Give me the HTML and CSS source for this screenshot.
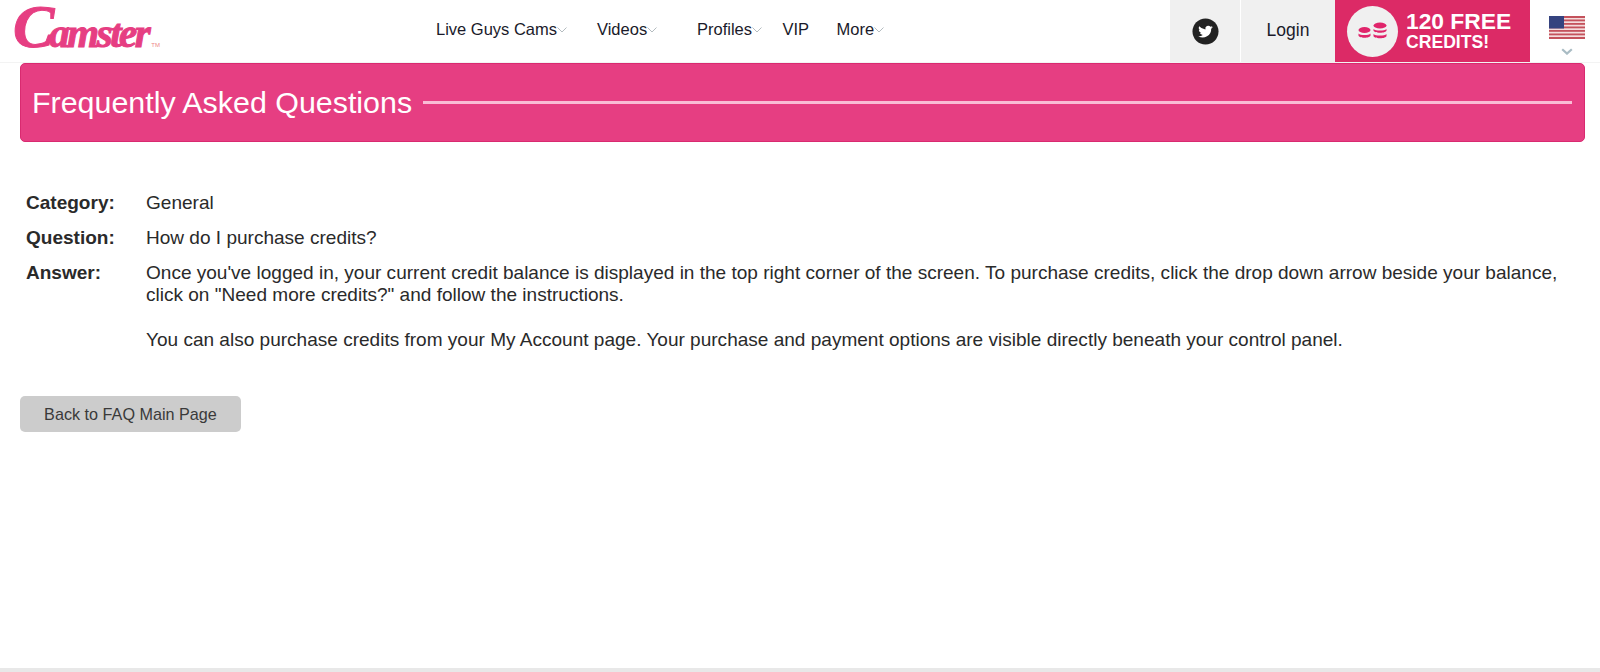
FILE: index.html
```html
<!DOCTYPE html>
<html lang="en">
<head>
<meta charset="utf-8">
<title>Frequently Asked Questions</title>
<link rel="stylesheet" href="styles.css">
</head>
<body>
<header class="header">
  <a class="logo"><span class="logo-c">C</span><span class="logo-rest">amster</span><span class="logo-tm">TM</span></a>
  <nav class="nav">
    <a class="nav-item nav-live">Live Guys Cams<svg class="caret" viewBox="0 0 10 6"><path d="M.5.5 5 5 9.5.5"/></svg></a>
    <a class="nav-item nav-videos">Videos<svg class="caret" viewBox="0 0 10 6"><path d="M.5.5 5 5 9.5.5"/></svg></a>
    <a class="nav-item nav-profiles">Profiles<svg class="caret" viewBox="0 0 10 6"><path d="M.5.5 5 5 9.5.5"/></svg></a>
    <a class="nav-item nav-vip">VIP</a>
    <a class="nav-item">More<svg class="caret" viewBox="0 0 10 6"><path d="M.5.5 5 5 9.5.5"/></svg></a>
  </nav>
  <div class="actions">
    <a class="cell cell-twitter">
      <svg class="twitter" viewBox="0 0 28 28">
        <circle cx="14" cy="14" r="13.500" fill="#222"/>
        <path fill="#fff" d="M21.600 9.400c-.6.3-1.200.4-1.800.5.6-.4 1.100-1 1.400-1.700-.6.4-1.300.6-2 .8a3.100 3.100 0 0 0-5.300 2.800A8.800 8.800 0 0 1 7.500 8.600a3.100 3.100 0 0 0 1 4.100c-.5 0-1-.2-1.400-.4 0 1.500 1.100 2.800 2.500 3.100-.5.100-.9.100-1.400 0 .4 1.200 1.500 2.100 2.900 2.100A6.200 6.200 0 0 1 6.500 18.800a8.700 8.700 0 0 0 13.400-7.700c.6-.5 1.200-1 1.700-1.700z"/>
      </svg>
    </a>
    <a class="cell cell-login">Login</a>
    <a class="cell cell-credits">
      <span class="coin-disc">
        <svg class="coins" viewBox="0 0 30 18">
          <g fill="#e0256b">
            <ellipse cx="6.500" cy="8" rx="6" ry="3"/>
            <path d="M.5 11.500c1 1 3 1.600 6 1.600s5-.6 6-1.600v2c0 1.200-2.500 2.300-6 2.300s-6-1.100-6-2.300z"/>
            <ellipse cx="22" cy="3.500" rx="6.500" ry="3"/>
            <path d="M15.500 7c1 1 3.500 1.500 6.500 1.500S27.500 8 28.500 7v1.500c0 1.200-2.800 2.300-6.500 2.300s-6.500-1.100-6.500-2.300z"/>
            <path d="M15.500 12c1 1 3.500 1.500 6.500 1.500s5.500-.5 6.500-1.500v2c0 1.200-2.800 2.300-6.500 2.300s-6.500-1.100-6.500-2.300z"/>
          </g>
        </svg>
      </span>
      <span class="credit-text"><span class="credit-big">120 FREE</span><span class="credit-small">CREDITS!</span></span>
    </a>
    <a class="flag-cell">
      <svg class="flag" viewBox="0 0 36 23">
        <rect width="36" height="23" fill="#f4dcdc"/>
        <g fill="#c4525c">
          <rect width="36" height="2"/>
          <rect y="3.500" width="36" height="1.800"/>
          <rect y="7" width="36" height="1.800"/>
          <rect y="10.500" width="36" height="1.800"/>
          <rect y="14" width="36" height="1.800"/>
          <rect y="17.500" width="36" height="1.800"/>
          <rect y="21" width="36" height="2"/>
        </g>
        <rect width="15" height="12.500" fill="#35437f"/>
      </svg>
      <svg class="flag-caret" viewBox="0 0 12 7"><path d="M1.200 1.200 6 5.600l4.800-4.400"/></svg>
    </a>
  </div>
</header>

<main class="main">
  <div class="banner">
    <h1 class="banner-title">Frequently Asked Questions</h1>
    <span class="banner-rule"></span>
  </div>

  <dl class="faq">
    <dt class="faq-label">Category:</dt>
    <dd class="faq-value">General</dd>
    <dt class="faq-label">Question:</dt>
    <dd class="faq-value">How do I purchase credits?</dd>
    <dt class="faq-label">Answer:</dt>
    <dd class="faq-value">
      <p class="faq-para">Once you've logged in, your current credit balance is displayed in the top right corner of the screen. To purchase credits, click the drop down arrow beside your balance, click on "Need more credits?" and follow the instructions.</p>
      <p class="faq-para">You can also purchase credits from your My Account page. Your purchase and payment options are visible directly beneath your control panel.</p>
    </dd>
  </dl>

  <a class="back-btn">Back to FAQ Main Page</a>
</main>

<footer class="footer"></footer>
</body>
</html>
```

FILE: styles.css
```css
* { box-sizing: border-box; }

html, body { height: 100%; }

body {
  margin: 0;
  height: 672px;
  overflow: hidden;
  display: flex;
  flex-direction: column;
  background: #fff;
  color: #2a2a2a;
  font-family: "Liberation Sans", Arial, sans-serif;
}

.header {
  height: 63px;
  flex: none;
  display: flex;
  border-bottom: 1px solid #f3f3f3;
}

.logo {
  width: 436px;
  flex: none;
  height: 62px;
  padding: 0 0 0 13px;
  display: flex;
  align-items: baseline;
  color: #e63e82;
  font-family: "Liberation Serif", serif;
  font-style: italic;
  font-weight: 700;
  line-height: 52px;
  -webkit-text-stroke: 1px #e63e82;
}

.logo-c { font-size: 62px; padding-right: 4px; }
.logo-rest { font-size: 41px; letter-spacing: -2.500px; margin-left: -9px; }
.logo-tm {
  font-family: "Liberation Sans", sans-serif;
  font-style: normal;
  font-weight: 400;
  font-size: 6px;
  margin-left: 3px;
  color: #e88;
  -webkit-text-stroke: 0;
}

.nav {
  flex: 1;
  display: flex;
  align-items: center;
  height: 59px;
  font-size: 16.500px;
  color: #1a1a2a;
}

.nav-item { display: flex; align-items: center; white-space: nowrap; }
.nav-live { width: 161px; }
.nav-videos { width: 100px; }
.nav-profiles { width: 85.500px; }
.nav-vip { width: 54px; }

.caret {
  width: 10px;
  height: 6px;
  margin-top: 1px;
  fill: none;
  stroke: #b4bcc0;
  stroke-width: 1;
}

.actions { display: flex; flex: none; }

.cell {
  height: 62px;
  display: flex;
  align-items: center;
  background: #f0f0f0;
}

.cell-twitter {
  width: 70px;
  justify-content: center;
  margin-right: 1px;
}

.twitter { width: 27px; height: 27px; }

.cell-login {
  width: 94px;
  justify-content: center;
  padding-bottom: 1px;
  font-size: 17.500px;
  color: #1a1a2a;
}

.cell-credits {
  width: 195px;
  padding-left: 12px;
  gap: 8px;
  background: #dc2a66;
  color: #fff;
  font-weight: 700;
}

.coin-disc {
  width: 51px;
  height: 51px;
  border-radius: 50%;
  background: #f0f0f0;
  display: flex;
  align-items: center;
  justify-content: center;
}

.coins { width: 30px; height: 18px; }

.credit-text { display: flex; flex-direction: column; margin-top: -2px; }
.credit-big { font-size: 22.800px; line-height: 24px; }
.credit-small { font-size: 17.600px; line-height: 18px; }

.flag-cell {
  width: 70px;
  display: flex;
  flex-direction: column;
  align-items: center;
  padding: 16px 0 0 4px;
}

.flag { width: 36px; height: 23px; }

.flag-caret {
  width: 12px;
  height: 7px;
  margin-top: 9px;
  fill: none;
  stroke: #a9bcc4;
  stroke-width: 2.200;
}

.main {
  flex: 1;
  padding: 0 15px 0 20px;
}

.banner {
  height: 79px;
  display: flex;
  align-items: center;
  gap: 11px;
  padding: 0 12px 0 11px;
  background: #e63e82;
  border: 1px solid #d92a70;
  border-radius: 5px;
}

.banner-title {
  margin: 0;
  font-size: 30.400px;
  font-weight: 400;
  color: #fff;
  white-space: nowrap;
}

.banner-rule {
  flex: 1;
  height: 3px;
  background: #f9bcd5;
}

.faq {
  margin: 50px 0 0;
  display: grid;
  grid-template-columns: 120px 1fr;
  padding-left: 6px;
  row-gap: 13px;
  font-size: 19.040px;
  line-height: 22px;
}

.faq-label { font-weight: 700; }
.faq-value { margin: 0; }
.faq-para { margin: 0 0 23px; }
.faq-para:last-child { margin-bottom: 0; }

.back-btn {
  display: block;
  width: 221px;
  height: 36px;
  margin-top: 45px;
  border-radius: 5px;
  background: #cccccc;
  color: #3a3a3a;
  font-size: 16.200px;
  line-height: 36px;
  text-align: center;
}

.footer {
  height: 4px;
  flex: none;
  background: #e8e8e8;
}
```
